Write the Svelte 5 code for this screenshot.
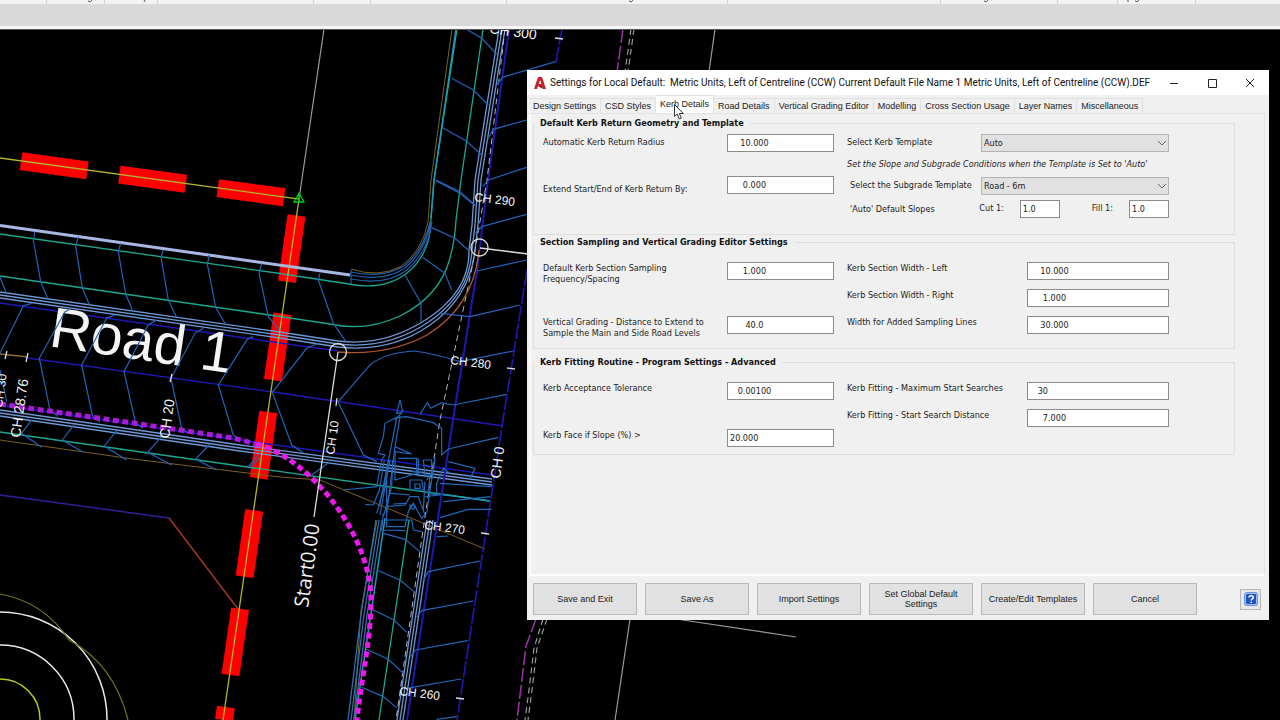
<script>
  const title = "Settings for Local Default:\u00a0 Metric Units, Left of Centreline (CCW) Current Default File Name 1 Metric Units, Left of Centreline (CCW).DEF";

  const tabs = [
    "Design Settings",
    "CSD Styles",
    "Kerb Details",
    "Road Details",
    "Vertical Grading Editor",
    "Modelling",
    "Cross Section Usage",
    "Layer Names",
    "Miscellaneous",
  ];
  let active = "Kerb Details";

  const actions = ["Save and Exit", "Save As", "Import Settings", "Set Global Default Settings", "Create/Edit Templates", "Cancel"];

  let kerb_template = "Auto";
  let subgrade_template = "Road - 6m";

  // ribbon panel edges and the small marks above the file tabs
  const panel_edges = [46, 104, 157, 313, 370, 506, 727, 940, 1057, 1117, 1195];
  const marks = [88, 629, 984, 1135];

  // chainage labels on the canvas
  const chainages = [
    { x: 489, y: 33, r: 8, size: 14, text: "CH 300" },
    { x: 474, y: 201, r: 7, size: 12, text: "CH 290" },
    { x: 450, y: 364, r: 7, size: 12, text: "CH 280" },
    { x: 424, y: 529, r: 7, size: 12, text: "CH 270" },
    { x: 399, y: 695, r: 7, size: 12, text: "CH 260" },
    { x: 500, y: 479, r: -82, size: 14, text: "CH 0" },
    { x: 334, y: 455, r: -82, size: 12, text: "CH 10" },
    { x: 169, y: 439, r: -82, size: 14, text: "CH 20" },
    { x: 20, y: 438, r: -82, size: 14, text: "CH 28.76" },
    { x: 2, y: 408, r: -82, size: 12, text: "CH 30" },
  ];

  const kerb_offsets = [0, 3, 6];
</script>

<svelte:head>
  <title>Kerb Details</title>
</svelte:head>

<div class="app">
  <header class="ribbon">
    <svg width="100%" height="4" aria-hidden="true" fill="none">
      {#each panel_edges as x}
        <path d="M{x}.5 0V4" stroke="#d2d2d2" />
      {/each}
      {#each marks as x}
        <path d="M{x} 1Q{x + 3} 3 {x + 4} 0" stroke="#555" />
      {/each}
      <path d="M145 0 144 2M1128 0V2" stroke="#555" />
    </svg>
    <div class="file-tabs"></div>
  </header>

  <main class="canvas">
    <svg class="drawing" viewBox="0 30 1280 690" preserveAspectRatio="xMinYMin slice" fill="none">
      <!-- survey lines -->
      <g stroke="#9a9a9a" stroke-width="1.2">
        <path d="M324 29 299 199M715 29 709 72M630 619 615 720M676 619 796 637" />
        <path d="M631 29 625 72M634 29 628 72M543 619 534 648 529 690 525 720M547 619 537 648 532 690 528 720" stroke-dasharray="6 4" />
      </g>
      <path d="M623 29 617 72M536 619 526 646 517 720" stroke="#a030a8" stroke-width="1.5" stroke-dasharray="14 3" />

      <!-- boundary -->
      <g stroke="#f00" stroke-width="18" stroke-dasharray="67 32.3">
        <path d="M21 161.2 286 197.5" />
        <path d="M296.5 215.5 224 720" />
      </g>

      <!-- main road surface -->
      <g stroke="#1ca890" stroke-width="1.3">
        <path d="M0 234 280 273.5 349 284Q384 291 407 273 426 258 430 232L434 180 457 29" />
        <path d="M0 276 280 316.5 330 324Q366 332 400 316 440 296 450 258 455 240 456 220L461 180 483 29" />
        <path d="M0 432 240 466 490 501M409 520 379 720" />
      </g>
      <g stroke="#1a9ab8" stroke-width="1.5">
        <path d="M431 218 434 180 456 29M385 518 373 600 355 720M440 494 490 501" />
      </g>
      <g stroke="#235ea8" stroke-width="1.2">
        <path d="M351 272Q382 279 404 266 424 250 430 222M351 275Q384 282 405 268 426 250 431 222M351 279Q386 286 407 270 428 252 432 222M351 270V284" />
      </g>
      <path d="M351 269Q378 278 400 267 422 252 428 222L431 180 452 29" stroke="#7a601e" />
      <path d="M0 440 133 459 280 477 320 480 485 549M377 520 361 610 354 720" stroke="#7a601e" />
      <path d="M0 225.5 350 275" stroke="#a8b8e4" stroke-width="3" />

      <g stroke="#6c98d4" stroke-width="1.3">
        {#each kerb_offsets as o}
          <path
            d="M0 {292 + o}L280 {332 + o} 338 {341 + o}Q{384 + o} {347 + o} {427 + o / 2} {319 + o}T{469 + o} 250L{472 + o} 225 {475 + o} 180 {499 + o} 29"
          />
          <path d="M0 {410 + o}L240 {445 + o} 492 {479 + o}" />
          <path d="M{427 + o} 520L{397 + o} 720" />
          <path d="M{376 + o} 520L{361 + o} 615 {348 + o} 720" stroke="#2f6fae" />
        {/each}
      </g>

      <g stroke="#2018b4" stroke-width="1.4">
        <path d="M0 303 280 343 338 351M28 358 280 393 503 426M0 405 240 440 492 475" />
        <path d="M509 29 488 180 477 271 453 420 407 720" stroke-width="2" />
        <path d="M0 495 169 518" stroke="#34209c" />
        <path d="M562 29 556 62M527 270 503 420 457 720" stroke-width="1.6" stroke-dasharray="16 2" />
      </g>
      <path d="M505 29 487 180 473 263 440 420 423 530 396 720" stroke="#b4b4c0" stroke-dasharray="6 4" />
      <path d="M338 352Q388 356 427 335 474 306 479 250" stroke="#b0562c" stroke-width="1.4" />
      <path d="M169 518 238 609" stroke="#a83a20" stroke-width="1.4" />
      <path d="M0 354 28 357" stroke="#8a6a38" stroke-width="1.3" />

      <text class="road" x="48" y="346" font-size="57" transform="rotate(8.5 48 346)">Road 1</text>

      <!-- section lines, left road -->
      <g transform="translate(0 220) scale(.3333)" stroke="#2264bc" stroke-width="3.6">
        <path d="M105 35 100 60 122 185 145 240M235 50 227 78 247 205 270 257M362 70 355 95 377 222 400 277M490 90 483 112 505 240 530 292M628 105 622 132 647 262 678 315M0 172 20 222" />
        <path d="M95 250 70 257 0 400M215 265 195 275 118 415 150 570 175 590M345 285 320 295 245 435 278 590 300 605M470 300 445 315 372 455 407 610 430 625M610 325 585 340 513 475 545 625 565 640M760 350 742 358 655 495 700 645 715 657M0 450 20 545" />
        <path d="M95 600 65 640 125 682M222 615 187 660 250 697M350 632 313 678 380 720M485 650 443 697 515 735M630 672 587 717 650 750M775 705 745 740" />
      </g>
      <!-- section lines, kerb return -->
      <g transform="translate(240 180) scale(.3333)" stroke="#2264bc" stroke-width="3.6">
        <path d="M65 250 57 280 85 410 118 450M240 280 235 300 280 430 318 485M235 490 200 505 97 637" />
        <path d="M588 0 660 35 705 75M575 143 645 175 685 210M548 232 615 280 635 330M495 285 543 370 543 425" />
        <path d="M295 665 390 555Q430 520 520 513 570 518 660 545L820 513M600 400 690 410 840 375M710 273 860 240M725 140 860 103M705 160 728 138" />
      </g>
      <g transform="translate(380 0) scale(.3333)" stroke="#2264bc" stroke-width="3.6">
        <path d="M255 85 305 115 350 162M215 235 280 270 325 315M190 385 258 422 305 465M168 542 237 578 285 617" />
        <path d="M345 262 368 232 527 185M323 418 340 388 440 360M308 560 325 540 440 502" />
      </g>
      <!-- intersection and side road -->
      <g transform="translate(240 380) scale(.3333)" stroke="#2068b8" stroke-width="3.6">
        <path d="M97 37 155 195 190 218M295 67 370 225 410 245M540 103 562 68 572 85 605 68 640 75 800 43M465 120 488 95 480 60 470 100 483 97" />
        <path d="M415 220 430 170 435 130 470 112 500 110 580 128 605 145 605 225 625 207 775 172M415 220 435 225 425 240 410 320 310 330M375 373 400 375 418 330 433 240M480 112 465 200 440 400M470 115 418 380" />
        <path d="M465 200 515 222 465 215 465 300 515 285 550 275M475 235 530 235 530 275 515 275M535 235 535 290M550 240 575 240 575 285 555 285ZM510 300 545 300 550 330 510 330ZM525 312 540 312 540 325 525 325ZM555 255 570 262" />
        <path d="M440 380 495 375 510 350 535 350 555 405 545 415 520 370 505 395 495 440 440 440 440 300M510 375 525 378 522 388 510 385ZM500 420 515 420 520 450 545 455M410 400 430 330 445 240M420 405 450 240M430 410 455 320 458 240M570 285 565 340 590 345 590 310 610 265 630 280M625 245 705 265 690 297M585 240 570 330 560 400M555 305 550 390" />
        <path d="M440 420 500 420M460 372 500 370M450 340 510 345M555 350 600 345M560 300 580 270 585 230M600 310 755 320M600 413 685 388 755 388M610 365 750 350M590 470 625 468M430 400 425 450 495 452" />
        <path d="M430 460 495 478 540 515M410 570 480 600 522 635M395 688 462 720 500 757M380 808 445 838 490 880M365 922 430 950 470 983" />
        <path d="M550 600 565 575 720 543M530 712 545 692 700 663M512 830 527 810 683 782M500 925 663 897M590 1018 650 1010M60 235 30 260M215 285 270 245" />
      </g>

      <!-- path -->
      <g stroke-dasharray="6 3.5">
        <path d="M0 404 133 423 233 438 256 444" stroke="#a81ad8" stroke-width="5" />
        <path d="M256 444C310 458 371 535 371 600 371 640 361 680 357 720" stroke="#ee18ee" stroke-width="5" />
      </g>

      <!-- roundabout -->
      <g stroke-width="1.5">
        <circle cx="0" cy="719" r="40" stroke="#a8d020" />
        <circle cx="0" cy="719" r="74" stroke="#e8e8e8" />
        <circle cx="0" cy="719" r="107" stroke="#e8e8e8" />
        <path d="M0 594Q44 602 69 640 114 664 128 720" stroke="#6c7a1c" stroke-width="1.2" />
      </g>

      <path d="M0 158 299 199 223 720" stroke="#b4b428" stroke-width="1.3" />
      <path d="M299 193 304 202H294ZM299 193V202" stroke="#00d010" stroke-width="1.3" />

      <!-- set-out marks -->
      <g stroke="#dcdcdc" stroke-width="1.3">
        <circle cx="338" cy="352" r="8.5" />
        <circle cx="479.5" cy="247.5" r="8.5" />
        <path d="M338 352 314 517M480 248 528 254" />
        <path d="M7 351 5 359M28 353 26 362M172 374 170 382M337 398 336 406M555 38 563 39M507 368 515 369M481 533 489 534M456 698 464 699" />
      </g>

      {#each chainages as c}
        <text x={c.x} y={c.y} font-size={c.size} transform="rotate({c.r} {c.x} {c.y})">{c.text}</text>
      {/each}
      <text class="start" x="308" y="608" font-size="20" transform="rotate(-82 308 608)">Start0.00</text>
    </svg>
  </main>

  <section class="dialog" role="dialog" aria-label="Settings">
    <div class="titlebar">
      <svg class="logo" viewBox="0 0 12 12" width="12" height="12" aria-hidden="true">
        <path d="M0 12 4 0H8L12 12H9L8 9H4L3 12ZM5 7H7.5L6 3Z" fill="#c8202c" />
        <path d="M4 9H8L9 12Z" fill="#8a1018" />
      </svg>
      <span class="title">{title}</span>
      <button class="win" aria-label="Minimize"><svg width="10" height="10"><path d="M1 5.5H9" /></svg></button>
      <button class="win" aria-label="Maximize"><svg width="10" height="10"><path d="M1.5 1.5H9.5V9.5H1.5Z" /></svg></button>
      <button class="win" aria-label="Close"><svg width="10" height="10"><path d="M1 1 9 9M9 1 1 9" /></svg></button>
    </div>

    <div class="tabs" role="tablist">
      {#each tabs as tab}
        <button role="tab" class:active={tab === active} aria-selected={tab === active} on:click={() => (active = tab)}>{tab}</button>
      {/each}
    </div>

    <div class="page">
      <fieldset class="geometry">
        <legend>Default Kerb Return Geometry and Template</legend>
        <div class="cols">
          <div class="col wide-gap">
            <div class="row">
              <label for="radius">Automatic Kerb Return Radius</label>
              <input id="radius" value="    10.000" />
            </div>
            <div class="row">
              <label class="low" for="extend">Extend Start/End of Kerb Return By:</label>
              <input id="extend" value="     0.000" />
            </div>
          </div>
          <div class="col tight">
            <div class="row">
              <label for="template">Select Kerb Template</label>
              <span class="select">
                <select id="template" bind:value={kerb_template}>
                  <option>Auto</option>
                  <option>Manual</option>
                </select>
                <svg width="8" height="6"><path d="M0 1 4 5 8 1" /></svg>
              </span>
            </div>
            <p class="note">Set the Slope and Subgrade Conditions when the Template is Set to 'Auto'</p>
            <div class="row inset">
              <label for="subgrade">Select the Subgrade Template</label>
              <span class="select">
                <select id="subgrade" bind:value={subgrade_template}>
                  <option>Road - 6m</option>
                  <option>Road - 8m</option>
                </select>
                <svg width="8" height="6"><path d="M0 1 4 5 8 1" /></svg>
              </span>
            </div>
            <div class="row inset slopes">
              <span class="label">'Auto' Default Slopes</span>
              <label for="cut">Cut 1:</label>
              <input id="cut" value="1.0" />
              <label for="fill">Fill 1:</label>
              <input id="fill" value="1.0" />
            </div>
          </div>
        </div>
      </fieldset>

      <fieldset class="sampling">
        <legend>Section Sampling and Vertical Grading Editor Settings</legend>
        <div class="cols">
          <div class="col spread">
            <div class="row">
              <label for="frequency">Default Kerb Section Sampling<br />Frequency/Spacing</label>
              <input id="frequency" value="     1.000" />
            </div>
            <div class="row">
              <label for="distance">Vertical Grading - Distance to Extend to<br />Sample the Main and Side Road Levels</label>
              <input id="distance" value="      40.0" />
            </div>
          </div>
          <div class="col right">
            <div class="row">
              <label for="left">Kerb Section Width - Left</label>
              <input id="left" value="    10.000" />
            </div>
            <div class="row">
              <label for="right">Kerb Section Width - Right</label>
              <input id="right" value="     1.000" />
            </div>
            <div class="row">
              <label for="added">Width for Added Sampling Lines</label>
              <input id="added" value="    30.000" />
            </div>
          </div>
        </div>
      </fieldset>

      <fieldset class="fitting">
        <legend>Kerb Fitting Routine - Program Settings - Advanced</legend>
        <div class="cols">
          <div class="col spread">
            <div class="row">
              <label for="tolerance">Kerb Acceptance Tolerance</label>
              <input id="tolerance" value="   0.00100" />
            </div>
            <div class="row">
              <label for="face">Kerb Face if Slope (%) &gt;</label>
              <input id="face" value="20.000" />
            </div>
          </div>
          <div class="col right">
            <div class="row">
              <label for="searches">Kerb Fitting - Maximum Start Searches</label>
              <input id="searches" value="   30" />
            </div>
            <div class="row">
              <label for="search-distance">Kerb Fitting - Start Search Distance</label>
              <input id="search-distance" value="     7.000" />
            </div>
          </div>
        </div>
      </fieldset>
    </div>

    <footer>
      {#each actions as action}
        <button class="action">{action}</button>
      {/each}
      <button class="help" aria-label="Help">
        <svg width="14" height="14" viewBox="0 0 14 14">
          <rect x=".5" y=".5" width="13" height="13" rx="2" fill="#9fc0f4" stroke="#6a94dc" />
          <rect x="2" y="2" width="10" height="10" rx="1" fill="#1c54c4" />
          <path d="M5 5.5C5 3 9.500 3 9.300 5.500 9 7 7.300 7 7.200 8.500M7.200 9.700V11" fill="none" stroke="#fff" stroke-width="1.5" />
        </svg>
      </button>
    </footer>

    <svg class="cursor" width="10" height="16" viewBox="0 0 10 16" aria-hidden="true">
      <path d="M.5.5V12.500L3.300 10 5.300 15 7.300 14 5.300 9.500H9.300Z" fill="#fff" stroke="#333" />
    </svg>
  </section>
</div>

<style>
  :global(body) {
    margin: 0;
    background: #000;
  }
  .app {
    position: relative;
    display: flex;
    flex-direction: column;
    height: 100vh;
    overflow: hidden;
    font-family: "DejaVu Sans Condensed", "DejaVu Sans", sans-serif;
    font-size: 9px;
    color: #222;
  }
  .ribbon {
    background: #f3f3f3;
    border-bottom: 1px solid #555;
  }
  .ribbon svg {
    display: block;
  }
  .file-tabs {
    height: 22px;
    background: #d9d9d9;
    border-bottom: 3px solid #f6f6f6;
  }
  .canvas {
    flex: 1;
    min-height: 0;
    background: #000;
  }
  .drawing {
    display: block;
    width: 100%;
    height: 100%;
  }
  .drawing text {
    font-family: "Liberation Sans", Arial, sans-serif;
    fill: #f4f4f4;
  }
  .drawing .start {
    font-family: "Open Sans", sans-serif;
  }

  .dialog {
    position: absolute;
    top: 70px;
    left: 527px;
    right: 11px;
    display: flex;
    flex-direction: column;
    background: #f0f0f0;
  }
  .titlebar {
    display: flex;
    align-items: center;
    height: 25px;
    padding-left: 7px;
    background: #fff;
  }
  .logo {
    flex: none;
  }
  .title {
    flex: 1;
    padding-left: 4px;
    white-space: nowrap;
    font-family: Roboto, sans-serif;
    font-size: 10px;
    color: #111;
  }
  button {
    padding: 0;
    border: 0;
    background: none;
    color: #222;
    font-family: "Liberation Sans", Arial, sans-serif;
    font-size: 9px;
  }
  .win {
    flex: none;
    width: 38px;
    height: 24px;
  }
  .win svg {
    display: block;
    margin: 0 auto;
    fill: none;
    stroke: #222;
  }

  .tabs {
    display: flex;
    align-items: flex-end;
    height: 18px;
    padding-left: 2px;
  }
  .tabs button {
    height: 15px;
    padding: 0 4px;
    border: 1px solid #e0e0e0;
    border-width: 1px 1px 0 0;
    white-space: nowrap;
  }
  .tabs .active {
    height: 18px;
    padding-bottom: 2px;
    background: #fff;
  }
  .page {
    min-height: 463px;
    margin: 0 4px 0 2px;
    padding: 3px 29px 0 2px;
    box-sizing: border-box;
    border: 1px solid #e2e2e2;
    border-left: 2px solid #fafafa;
    border-bottom: 2px solid #fff;
  }

  fieldset {
    min-width: 0;
    margin: 0;
    padding: 14px 65px 14px 9px;
    border: 1px solid #dfdfdf;
  }
  .geometry {
    padding-top: 5px;
    padding-bottom: 16px;
    margin-bottom: 1px;
  }
  .sampling {
    margin-bottom: 7px;
  }
  .fitting {
    padding-bottom: 7px;
  }
  legend {
    margin-left: -9px;
    padding: 0 6px;
    line-height: 12px;
    font-weight: bold;
    color: #111;
  }
  .cols {
    display: flex;
    gap: 13px;
  }
  .col {
    flex: 322;
    min-width: 0;
    display: flex;
    flex-direction: column;
    gap: 9px;
  }
  .col:first-child {
    flex: 291;
  }
  .spread {
    justify-content: space-between;
  }
  .wide-gap {
    gap: 24px;
  }
  .tight {
    gap: 5px;
  }
  .fitting .spread {
    gap: 29px;
  }
  .row {
    display: flex;
    align-items: flex-start;
    height: 18px;
  }
  label,
  .label {
    flex: 1;
    padding-top: 1px;
    line-height: 11px;
    white-space: nowrap;
  }
  .geometry label {
    padding-top: 3px;
  }
  .geometry .low {
    padding-top: 8px;
  }
  input,
  select {
    box-sizing: border-box;
    width: 107px;
    height: 18px;
    margin: 0;
    padding: 0 2px;
    border: 1px solid #8c8c8c;
    border-radius: 0;
    background: #fff;
    color: #222;
    font-family: inherit;
    font-size: 9px;
  }
  .right input {
    width: 142px;
  }
  .select {
    position: relative;
    width: 188px;
  }
  select {
    width: 100%;
    appearance: none;
    border-color: #b4b4b4;
    background: #e1e1e1;
  }
  .select svg {
    position: absolute;
    top: 6px;
    right: 3px;
    fill: none;
    stroke: #666;
  }
  .note {
    margin: 0;
    height: 15px;
    line-height: 15px;
    white-space: nowrap;
    font-style: italic;
  }
  .inset {
    padding-left: 3px;
  }
  .slopes {
    gap: 16px;
  }
  .slopes label {
    flex: none;
  }
  .slopes .label {
    padding-top: 4px;
  }
  .slopes input {
    width: 40px;
  }
  .slopes input + label {
    margin-left: 16px;
  }

  footer {
    display: flex;
    align-items: center;
    gap: 8px;
    padding: 7px 8px 5px 6px;
  }
  .action {
    width: 104px;
    height: 32px;
    padding: 0 4px;
    border: 1px solid #b8b8b8;
    background: #e1e1e1;
    line-height: 10px;
  }
  .help {
    display: flex;
    align-items: center;
    justify-content: center;
    width: 21px;
    height: 21px;
    margin-left: auto;
    border: 1px solid #b8b8b8;
    background: #e8e8e8;
  }
  .cursor {
    position: absolute;
    top: 34px;
    left: 147px;
  }
</style>
